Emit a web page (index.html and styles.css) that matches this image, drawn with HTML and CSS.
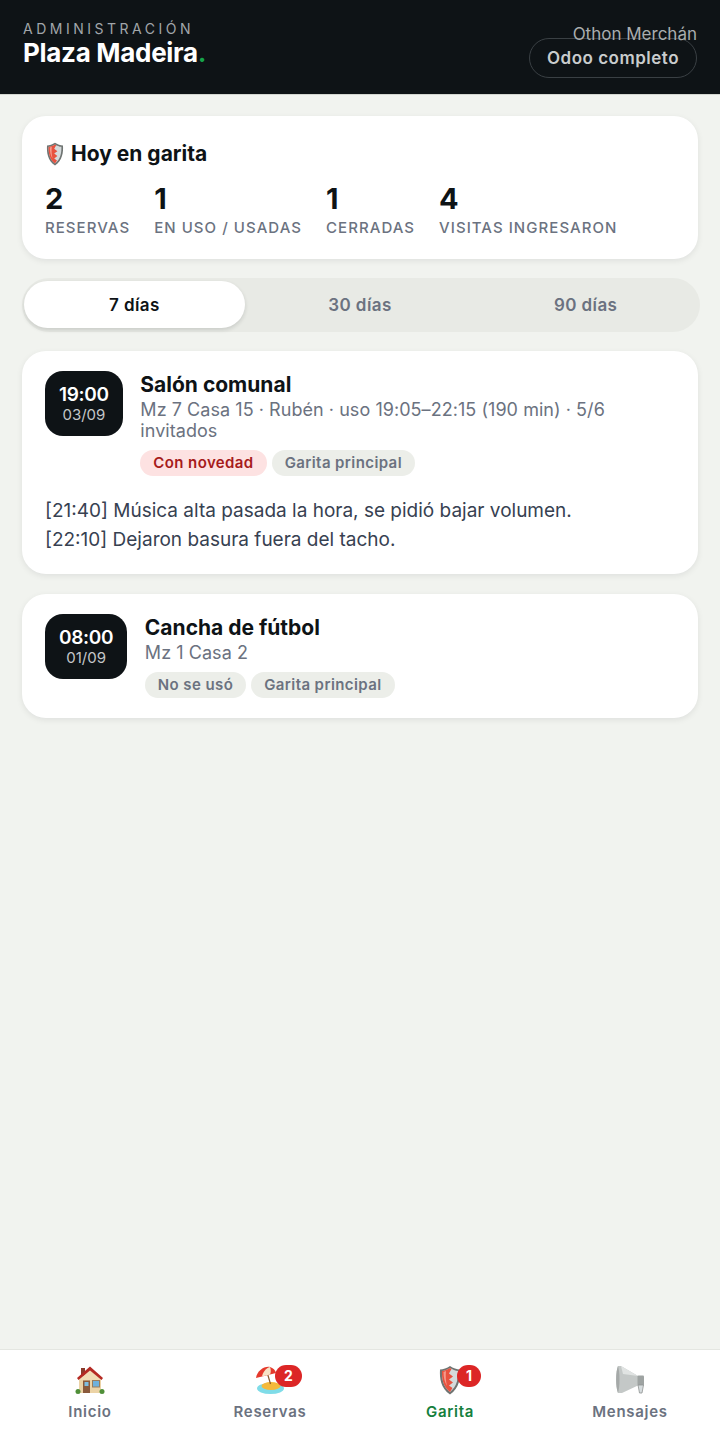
FILE: index.html
```html
<!DOCTYPE html>
<html lang="es">

<head>
    <meta charset="UTF-8">
    <meta name="viewport" content="width=device-width, initial-scale=1.0">
    <title>Garita - Plaza Madeira</title>
    <link rel="stylesheet" href="styles.css">
</head>

<body>
    <svg class="icon-defs" width="0" height="0" aria-hidden="true">
        <symbol id="icon-shield" viewBox="0 0 22 30">
            <path d="M11 1 C8 3 4 4.5 1 4.5 C0.5 13 1.5 23 11 29.5 C20.5 23 21.5 13 21 4.5 C18 4.5 14 3 11 1Z" fill="#6f7472"/>
            <path d="M11 3 C8.5 4.6 5.5 5.8 3 6 C2.8 13.5 4 21.5 11 27 C18 21.5 19.2 13.5 19 6 C16.5 5.8 13.5 4.6 11 3Z" fill="#d5dadb"/>
            <path d="M11 3 C8.5 4.6 5.5 5.8 3 6 C2.8 13.5 4 21.5 11 27 L13.5 23 L10 20.5 L14 17.5 L10 14.5 L14 11.5 L10 8.5 L12.5 4Z" fill="#e8523f"/>
            <path d="M4.5 7 C4.5 12 5.5 17 8 21 C6.8 16 6.5 11 7 6Z" fill="#f49a8b"/>
        </symbol>
    </svg>

    <header class="topbar">
        <div class="brand">
            <div class="brand-kicker">ADMINISTRACIÓN</div>
            <div class="brand-name">Plaza Madeira<span class="brand-dot">.</span></div>
        </div>
        <div class="user-box">
            <div class="user-name">Othon Merchán</div>
            <a href="#" class="odoo-button">Odoo completo</a>
        </div>
    </header>

    <main class="content">
        <section class="card today-card">
            <h2 class="today-title">
                <svg class="today-icon" viewBox="0 0 22 30"><use href="#icon-shield"></use></svg>
                Hoy en garita
            </h2>
            <div class="stats">
                <div class="stat">
                    <div class="stat-number">2</div>
                    <div class="stat-label">RESERVAS</div>
                </div>
                <div class="stat">
                    <div class="stat-number">1</div>
                    <div class="stat-label">EN USO / USADAS</div>
                </div>
                <div class="stat">
                    <div class="stat-number">1</div>
                    <div class="stat-label">CERRADAS</div>
                </div>
                <div class="stat">
                    <div class="stat-number">4</div>
                    <div class="stat-label">VISITAS INGRESARON</div>
                </div>
            </div>
        </section>

        <div class="range-tabs">
            <button class="range-tab active">7 días</button>
            <button class="range-tab">30 días</button>
            <button class="range-tab">90 días</button>
        </div>

        <section class="card booking-card">
            <div class="booking-row">
                <div class="time-tile">
                    <div class="time-hour">19:00</div>
                    <div class="time-date">03/09</div>
                </div>
                <div class="booking-info">
                    <h3 class="booking-title">Salón comunal</h3>
                    <p class="booking-meta">Mz 7 Casa 15 · Rubén · uso 19:05–22:15 (190 min) · 5/6 invitados</p>
                    <div class="chips">
                        <span class="chip chip-red">Con novedad</span>
                        <span class="chip">Garita principal</span>
                    </div>
                </div>
            </div>
            <p class="booking-notes">[21:40] Música alta pasada la hora, se pidió bajar volumen.<br>[22:10] Dejaron basura fuera del tacho.</p>
        </section>

        <section class="card booking-card">
            <div class="booking-row">
                <div class="time-tile">
                    <div class="time-hour">08:00</div>
                    <div class="time-date">01/09</div>
                </div>
                <div class="booking-info">
                    <h3 class="booking-title">Cancha de fútbol</h3>
                    <p class="booking-meta">Mz 1 Casa 2</p>
                    <div class="chips">
                        <span class="chip">No se usó</span>
                        <span class="chip">Garita principal</span>
                    </div>
                </div>
            </div>
        </section>
    </main>

    <nav class="bottom-nav">
        <a href="#" class="nav-item">
            <span class="nav-icon">
                <svg viewBox="0 0 30 30" width="30" height="30">
                    <rect x="6" y="3" width="4" height="8" fill="#8a3a2c"/>
                    <rect x="4" y="12" width="22" height="16" fill="#ecd3a6"/>
                    <path d="M15 5 L27 15 L3 15Z" fill="#f1dcb6"/>
                    <path d="M15 1.5 L28 13 L26.5 15 L15 5.5 L3.5 15 L2 13Z" fill="#b52a24"/>
                    <rect x="8" y="15.5" width="7" height="12.5" fill="#8a5a3c"/>
                    <rect x="9.5" y="17" width="4" height="4" fill="#7fbde0"/>
                    <rect x="17.5" y="15.5" width="7" height="6.5" fill="#6fb1dc" stroke="#9b7d5a"/>
                    <circle cx="3" cy="26.5" r="2.5" fill="#4f8f38"/>
                    <circle cx="27" cy="26.5" r="2.5" fill="#4f8f38"/>
                </svg>
            </span>
            <span class="nav-label">Inicio</span>
        </a>
        <a href="#" class="nav-item">
            <span class="nav-icon">
                <svg viewBox="0 0 30 30" width="30" height="30">
                    <ellipse cx="15.5" cy="23.5" rx="13.5" ry="5.5" fill="#7fdce8"/>
                    <ellipse cx="16" cy="21" rx="9.5" ry="4" fill="#f4b93a"/>
                    <path d="M12 7 L15.5 19" stroke="#8a5a2c" stroke-width="1.2"/>
                    <path d="M1 13 C2 6 9 1 15 2 C18 3 20.5 5 21 8Z" fill="#e5392c"/>
                    <path d="M7 11.5 C8 7 11 3 15 2 C16 5 16 7 15 9.5Z" fill="#f6e3c5"/>
                </svg>
                <span class="nav-badge">2</span>
            </span>
            <span class="nav-label">Reservas</span>
        </a>
        <a href="#" class="nav-item current">
            <span class="nav-icon">
                <svg viewBox="0 0 22 30" width="22" height="30"><use href="#icon-shield"></use></svg>
                <span class="nav-badge nav-badge-small">1</span>
            </span>
            <span class="nav-label">Garita</span>
        </a>
        <a href="#" class="nav-item">
            <span class="nav-icon">
                <svg viewBox="0 0 30 30" width="30" height="30">
                    <path d="M3 1 L6 1 L23 11 L24 20 L7 28 L3 28 C0.5 22 0.5 7 3 1Z" fill="#c4c8c7"/>
                    <path d="M3 1 C0.5 7 0.5 22 3 28 C5 22 5 7 3 1Z" fill="#a5a9a8"/>
                    <path d="M6 1 L23 11 L8 9Z" fill="#e0e3e2"/>
                    <rect x="22.5" y="10.5" width="6.5" height="10" rx="1" fill="#9ea3a2"/>
                    <path d="M23 20 L28.5 20 L27 28 L24.5 28Z" fill="#d6dcde" stroke="#8f9392" stroke-width="0.8"/>
                </svg>
            </span>
            <span class="nav-label">Mensajes</span>
        </a>
    </nav>
</body>

</html>
```

FILE: styles.css
```css
* {
    margin: 0;
    padding: 0;
    box-sizing: border-box;
    font-family: Inter, 'Noto Sans', sans-serif;
}

body {
    display: flex;
    flex-direction: column;
    min-height: 1440px;
    background: #f1f3ef;
    color: #0e1316;
}

.icon-defs {
    position: absolute;
}

.topbar {
    display: flex;
    justify-content: space-between;
    height: 95px;
    padding: 20px 23px 0 23px;
    background: #0e1316;
    border-bottom: 1px solid #d3d6d0;
}

.brand-kicker {
    color: #a1a6aa;
    font-size: 14px;
    line-height: 17px;
    letter-spacing: 3.5px;
}

.brand-name {
    color: #fff;
    font-size: 26px;
    font-weight: 700;
    line-height: 32px;
    letter-spacing: -0.3px;
}

.brand-dot {
    color: #16a34a;
}

.user-box {
    display: flex;
    flex-direction: column;
    align-items: flex-end;
}

.user-name {
    position: relative;
    z-index: 1;
    color: #a9adaf;
    font-size: 17px;
    line-height: 28px;
}

.odoo-button {
    display: block;
    height: 40px;
    margin-top: -10px;
    padding: 0 17px;
    border: 1px solid #3a4044;
    border-radius: 20px;
    color: #c9cccd;
    font-size: 17px;
    font-weight: 600;
    line-height: 38px;
    letter-spacing: 0.5px;
    text-decoration: none;
}

.content {
    flex: 1;
    display: flex;
    flex-direction: column;
    gap: 19px;
    padding: 21px 22px;
}

.card {
    background: #fff;
    border-radius: 24px;
    box-shadow: 0 2px 6px rgba(14, 19, 22, 0.08);
}

.today-card {
    height: 143px;
    padding: 23px 23px 0;
}

.today-title {
    display: flex;
    align-items: center;
    gap: 6px;
    font-size: 21px;
    font-weight: 700;
    line-height: 30px;
}

.today-icon {
    width: 20px;
    height: 24px;
}

.stats {
    display: flex;
    gap: 24px;
    margin-top: 14px;
}

.stat-number {
    font-size: 29px;
    font-weight: 700;
    line-height: 32px;
}

.stat-label {
    margin-top: 1px;
    color: #6b7280;
    font-size: 15px;
    font-weight: 500;
    line-height: 23px;
    letter-spacing: 1.05px;
}

.range-tabs {
    display: flex;
    gap: 5px;
    margin-right: -2px;
    padding: 3px 4px 4px 2px;
    background: #e8eae5;
    border-radius: 27px;
}

.range-tab {
    flex: 1;
    height: 47px;
    border: none;
    border-radius: 24px;
    background: none;
    color: #6b7280;
    font-size: 17px;
    font-weight: 600;
    letter-spacing: 0.4px;
}

.range-tab.active {
    background: #fff;
    color: #0e1316;
    box-shadow: 0 2px 4px rgba(14, 19, 22, 0.14);
}

.booking-card {
    padding: 20px 23px;
}

.booking-card + .booking-card {
    margin-top: 1px;
}

.booking-row {
    display: flex;
    gap: 17.5px;
}

.time-tile {
    flex: none;
    height: 65px;
    padding: 12px 14px 0;
    background: #0e1316;
    border-radius: 18px;
    color: #fff;
    text-align: center;
}

.time-hour {
    font-size: 19px;
    font-weight: 600;
    line-height: 23px;
    letter-spacing: -0.3px;
}

.time-date {
    color: #c4c7c9;
    font-size: 15px;
    line-height: 18px;
}

.booking-title {
    font-size: 21px;
    font-weight: 700;
    line-height: 28px;
}

.booking-meta {
    color: #6b7280;
    font-size: 18px;
    line-height: 21px;
    letter-spacing: 0.05px;
}

.chips {
    display: flex;
    gap: 5px;
    margin-top: 9px;
}

.chip {
    height: 26px;
    padding: 0 13px;
    border-radius: 13px;
    background: #eceee9;
    color: #6b7280;
    font-size: 15px;
    font-weight: 600;
    line-height: 26px;
    letter-spacing: 0.4px;
}

.chip-red {
    background: #fde2e2;
    color: #a61b1b;
}

.booking-notes {
    margin-top: 20px;
    color: #374151;
    font-size: 19px;
    line-height: 29px;
}

.bottom-nav {
    display: grid;
    grid-template-columns: repeat(4, 1fr);
    height: 91px;
    background: #fff;
    border-top: 1px solid #e4e6e1;
}

.nav-item {
    display: flex;
    flex-direction: column;
    align-items: center;
    padding-top: 15px;
    color: #6b7280;
    text-decoration: none;
}

.nav-item.current {
    color: #15803d;
}

.nav-icon {
    position: relative;
    display: flex;
    height: 30px;
}

.nav-label {
    margin-top: 7px;
    font-size: 15px;
    font-weight: 600;
    line-height: 20px;
    letter-spacing: 0.7px;
}

.nav-badge {
    position: absolute;
    top: 0;
    left: 20px;
    width: 27px;
    height: 22px;
    border-radius: 11px;
    background: #dc2626;
    color: #fff;
    font-size: 14px;
    font-weight: 700;
    line-height: 22px;
    text-align: center;
}

.nav-badge-small {
    left: 18px;
    width: 24px;
}
```
